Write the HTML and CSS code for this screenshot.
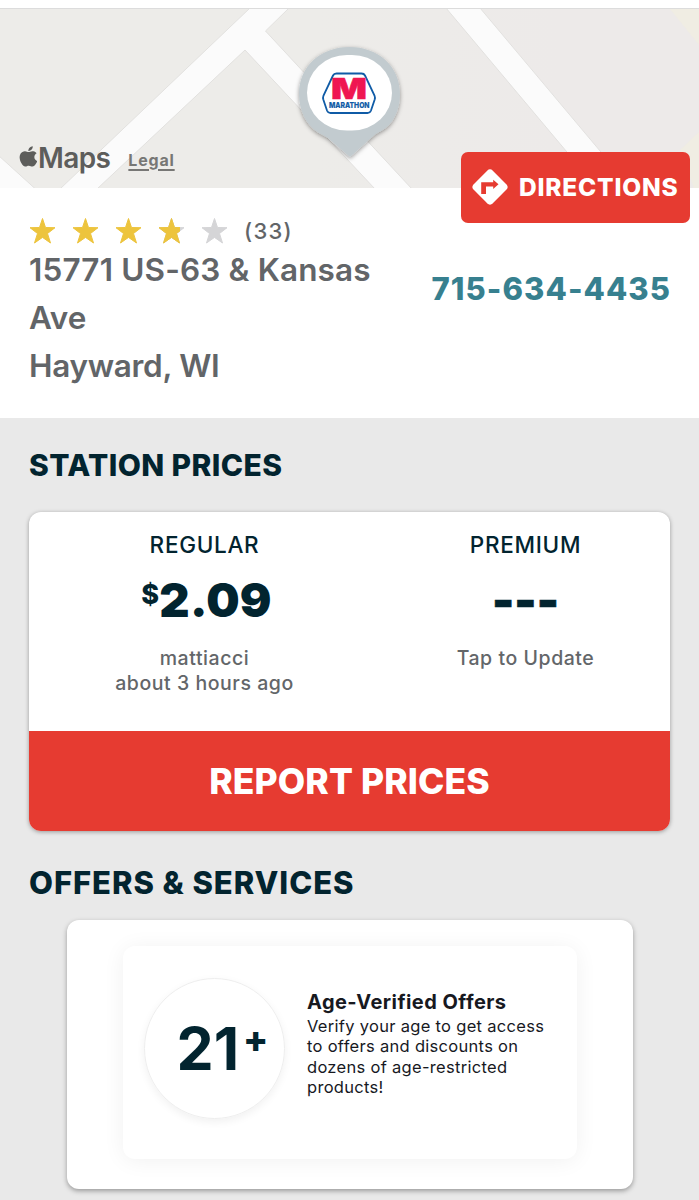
FILE: index.html
```html
<!DOCTYPE html>
<html lang="en">
<head>
<meta charset="utf-8">
<title>Station details</title>
<link rel="stylesheet" href="styles.css">
</head>
<body>
<main class="page">
  <section class="map">
    <svg class="map-canvas" viewBox="0 9 699 179" aria-hidden="true">
      <defs>
        <linearGradient id="land" x1="0" y1="0" x2="1" y2="0">
          <stop offset="0.45" stop-color="#edece9"/>
          <stop offset="0.8" stop-color="#edeae9"/>
        </linearGradient>
        <filter id="pin-shadow" x="-20%" y="-20%" width="140%" height="140%">
          <feDropShadow dx="0" dy="1.5" stdDeviation="2.2" flood-color="#000" flood-opacity="0.4"/>
        </filter>
      </defs>
      <rect y="9" width="699" height="179" fill="url(#land)"/>
      <path fill="#f0ede3" d="M670 9H699V45ZM699 132V188H694L680 150Z"/>
      <g fill="#fbfbfb" stroke="#e2e1df" stroke-width="1">
        <path d="M250 8H289L265.500 31L412 189H375L245 50L97 189H60Z"/>
        <path d="M-2 155L35.500 189H-2Z"/>
        <path d="M446 8H480L632 189H598Z"/>
      </g>
      <g filter="url(#pin-shadow)">
        <path fill="#c2cbcf" d="M350 157L328 138Q323 135 318 132.500C306 125 299 110 299 94C299 66 321 47 349.500 47C378 47 400 66 400 94C400 110 393 125 381 131Q376 133 371 138Z"/>
      </g>
      <rect x="307" y="55" width="85" height="75.500" rx="40" ry="37.750" fill="#fff"/>
      <path fill="#fff" stroke="#0f5ba6" stroke-width="1.800" d="M336.500 73.500H361.500Q364 73.500 365 75.500L374.500 95.500Q375.300 97.500 374.700 99.500L371 110.500Q370 113 367.500 113H330.500Q328 113 327 110.500L323.300 99.500Q322.700 97.500 323.500 95.500L333 75.500Q334 73.500 336.500 73.500Z"/>
      <text class="logo-initial" x="331" y="99" textLength="36" lengthAdjust="spacingAndGlyphs">M</text>
      <text class="logo-name" x="329" y="107.700" textLength="40.500" lengthAdjust="spacingAndGlyphs">MARATHON</text>
    </svg>
    <div class="map-credit">
      <svg class="apple" viewBox="4.800 2.300 16.200 20" preserveAspectRatio="none" aria-hidden="true"><path d="M18.700 12.400c0-2.400 1.900-3.500 2-3.600-1.100-1.600-2.800-1.800-3.400-1.800-1.400-.15-2.800.85-3.500.85-.75 0-1.850-.83-3.040-.8-1.560.02-3 .9-3.800 2.300-1.630 2.820-.42 7 1.170 9.280.77 1.120 1.700 2.380 2.900 2.330 1.170-.05 1.600-.75 3.020-.75 1.400 0 1.800.75 3.040.73 1.260-.02 2.050-1.140 2.820-2.270.9-1.300 1.250-2.560 1.270-2.620-.03-.01-2.450-.94-2.480-3.650M16.400 5.500c.64-.78 1.080-1.860.96-2.940-.93.04-2.050.62-2.710 1.390-.6.690-1.120 1.790-.98 2.840 1.030.08 2.090-.52 2.730-1.290"/></svg>
      <span class="maps-name">Maps</span>
      <a class="legal">Legal</a>
    </div>
  </section>

  <section class="station">
    <div class="details">
      <div class="rating">
        <svg class="stars" viewBox="0 0 201 26" aria-hidden="true">
          <defs>
            <path id="star" d="M13.500 .5L16.500 9.500L26 9.700L18.500 15.500L21.500 25L13.500 19.400L5.500 25L8.500 15.500L1 9.700L10.500 9.500Z" stroke-linejoin="round" stroke-width="1"/>
            <clipPath id="partial"><rect width="22" height="26"/></clipPath>
          </defs>
          <g fill="#edc43d" stroke="#edc43d">
            <use href="#star"/><use href="#star" x="43"/><use href="#star" x="86"/>
          </g>
          <g fill="#d5d5d7" stroke="#d5d5d7"><use href="#star" x="129"/><use href="#star" x="172"/></g>
          <g transform="translate(129 0)" fill="#edc43d" stroke="#edc43d"><use href="#star" clip-path="url(#partial)"/></g>
        </svg>
        <span class="count">(33)</span>
      </div>
      <address class="address"><span class="street">15771 US-63 &amp; Kansas</span><br>Ave<br><span class="city">Hayward, WI</span></address>
    </div>
    <div class="contact">
      <a class="directions">
        <svg class="turn" viewBox="0 0 36 36" aria-hidden="true">
          <rect x="4.500" y="4.500" width="27" height="27" rx="4" transform="rotate(45 18 18)" fill="#fff"/>
          <path d="M9.200 25V13.200H21.200V10.800L26.500 15.300L21.200 20V17.500H14V25Z" fill="#e63b31"/>
        </svg>
        <span>DIRECTIONS</span>
      </a>
      <a class="phone">715-634-4435</a>
    </div>
  </section>

  <section class="content">
    <h2 class="heading prices-heading">STATION PRICES</h2>
    <div class="prices">
      <div class="grades">
        <div class="grade">
          <span class="grade-name">REGULAR</span>
          <span class="price amount"><span class="currency">$</span>2.09</span>
          <span class="reported">mattiacci<br>about 3 hours ago</span>
        </div>
        <div class="grade">
          <span class="grade-name">PREMIUM</span>
          <span class="price empty">---</span>
          <span class="reported">Tap to Update</span>
        </div>
      </div>
      <a class="report">REPORT PRICES</a>
    </div>

    <h2 class="heading offers-heading">OFFERS &amp; SERVICES</h2>
    <div class="offers">
      <article class="offer">
        <div class="age">21<span class="plus">+</span></div>
        <div class="offer-copy">
          <h3 class="offer-title">Age-Verified Offers</h3>
          <p class="offer-text">Verify your age to get access<br>to offers and discounts on<br>dozens of age-restricted<br>products!</p>
        </div>
      </article>
    </div>
  </section>
</main>
</body>
</html>
```
FILE: styles.css
```css
* { box-sizing: border-box; }
body { margin: 0; background: #fff; font-family: Inter, "Liberation Sans", sans-serif; color: #02242f; }
h2, h3, p { margin: 0; }
.page { width: 699px; height: 1200px; padding-top: 8px; overflow: hidden; }

.map { position: relative; height: 180px; border-top: 1px solid #dcdcdc; }
.map-canvas { display: block; width: 699px; height: 179px; }
.logo-initial { font: 900 28px Inter, sans-serif; fill: #ef1651; stroke: #ef1651; stroke-width: .5px; }
.logo-name { font: 800 7.6px Inter, sans-serif; fill: #0f5ba6; stroke: #0f5ba6; stroke-width: .2px; }
.map-credit { position: absolute; left: 18px; top: 133px; height: 32px; display: flex; align-items: center; color: #5d5d5b; }
.apple { width: 19px; height: 22px; margin-top: -3px; fill: #5d5d5b; }
.maps-name { margin-left: 1px; font-size: 28px; font-weight: 600; letter-spacing: -0.6px; }
.legal { margin-left: 18px; padding-top: 3px; font-size: 16px; font-weight: 700; letter-spacing: 0.8px; color: #777775; text-decoration: underline; text-decoration-thickness: 1.5px; text-underline-offset: 3px; }

.station { display: flex; justify-content: space-between; height: 230px; padding: 0 9px 0 29px; }
.details { padding-top: 29px; }
.rating { display: flex; align-items: center; height: 27px; }
.stars { width: 201px; height: 26px; }
.count { margin-left: 14px; font-size: 22px; font-weight: 500; letter-spacing: 1.3px; color: #626568; }
.address { margin-top: 2px; font-style: normal; font-size: 31.500px; font-weight: 570; line-height: 48px; color: #626568; }
.street { letter-spacing: 0.15px; }
.city { letter-spacing: -0.3px; }
.contact { position: relative; display: flex; flex-direction: column; width: 229px; margin-top: -36px; }
.directions { display: flex; align-items: center; height: 71px; padding: 0 0 1px 11px; border-radius: 7px; background: #e63b31; color: #fff; font-size: 24.500px; font-weight: 800; letter-spacing: 0.8px; }
.turn { width: 36px; height: 36px; margin-right: 11px; }
.phone { margin: 49px 19px 0 0; align-self: flex-end; line-height: 34px; white-space: nowrap; font-size: 31px; font-weight: 800; letter-spacing: 1.050px; color: #37808f; }

.content { height: 782px; background: #e9e9e9; padding: 0 29px; }
.heading { font-size: 30px; font-weight: 800; line-height: 36px; }
.prices-heading { padding-top: 29px; letter-spacing: 0.4px; }
.prices { margin-top: 29px; height: 319px; border-radius: 12px; background: #fff; box-shadow: 0 1px 4px rgba(0,0,0,.35); overflow: hidden; }
.grades { display: flex; height: 219px; padding: 19px 0 0 15px; }
.grade { flex: none; width: 321px; display: flex; flex-direction: column; align-items: center; text-align: center; }
.grade-name { font-size: 22.500px; font-weight: 500; line-height: 28px; letter-spacing: 0.7px; }
.price { height: 58px; margin-top: 12px; line-height: 58px; font-size: 47px; font-weight: 900; }
.amount { padding-left: 4px; letter-spacing: 0.2px; }
.empty { -webkit-text-stroke: 0.6px #02242f; }
.currency { font-size: 27px; font-weight: 800; vertical-align: 13px; line-height: 1px; }
.reported { margin-top: 17px; font-size: 19.500px; line-height: 25px; font-weight: 500; letter-spacing: 0.55px; color: #636669; }
.report { display: flex; align-items: center; justify-content: center; height: 100px; background: #e63b31; color: #fff; font-size: 35.500px; font-weight: 800; letter-spacing: 0.1px; }
.offers-heading { padding-top: 34px; font-size: 31px; letter-spacing: 0.950px; }
.offers { margin: 19px 37px 0 38px; height: 269px; padding: 26px 56px 30px; border-radius: 12px; background: #fff; box-shadow: 0 2px 5px rgba(0,0,0,.35); }
.offer { display: flex; height: 213px; border-radius: 12px; background: #fff; box-shadow: 0 2px 22px rgba(0,0,0,.06); }
.age { display: flex; align-items: center; justify-content: center; flex: none; width: 141px; height: 141px; margin: 32px 0 0 21px; border: 1px solid #eee; border-radius: 50%; box-shadow: 0 3px 8px rgba(0,0,0,.06); font-size: 59px; font-weight: 700; padding-left: 16px; }
.plus { font-size: 37px; font-weight: 800; margin: -20px 0 0 4px; }
.offer-copy { padding: 44px 0 0 22px; color: #17191f; white-space: nowrap; }
.offer-title { font-size: 20px; line-height: 25px; font-weight: 700; letter-spacing: 0.45px; }
.offer-text { padding-top: 1px; font-size: 16.500px; line-height: 20.300px; letter-spacing: 0.3px; }
```
